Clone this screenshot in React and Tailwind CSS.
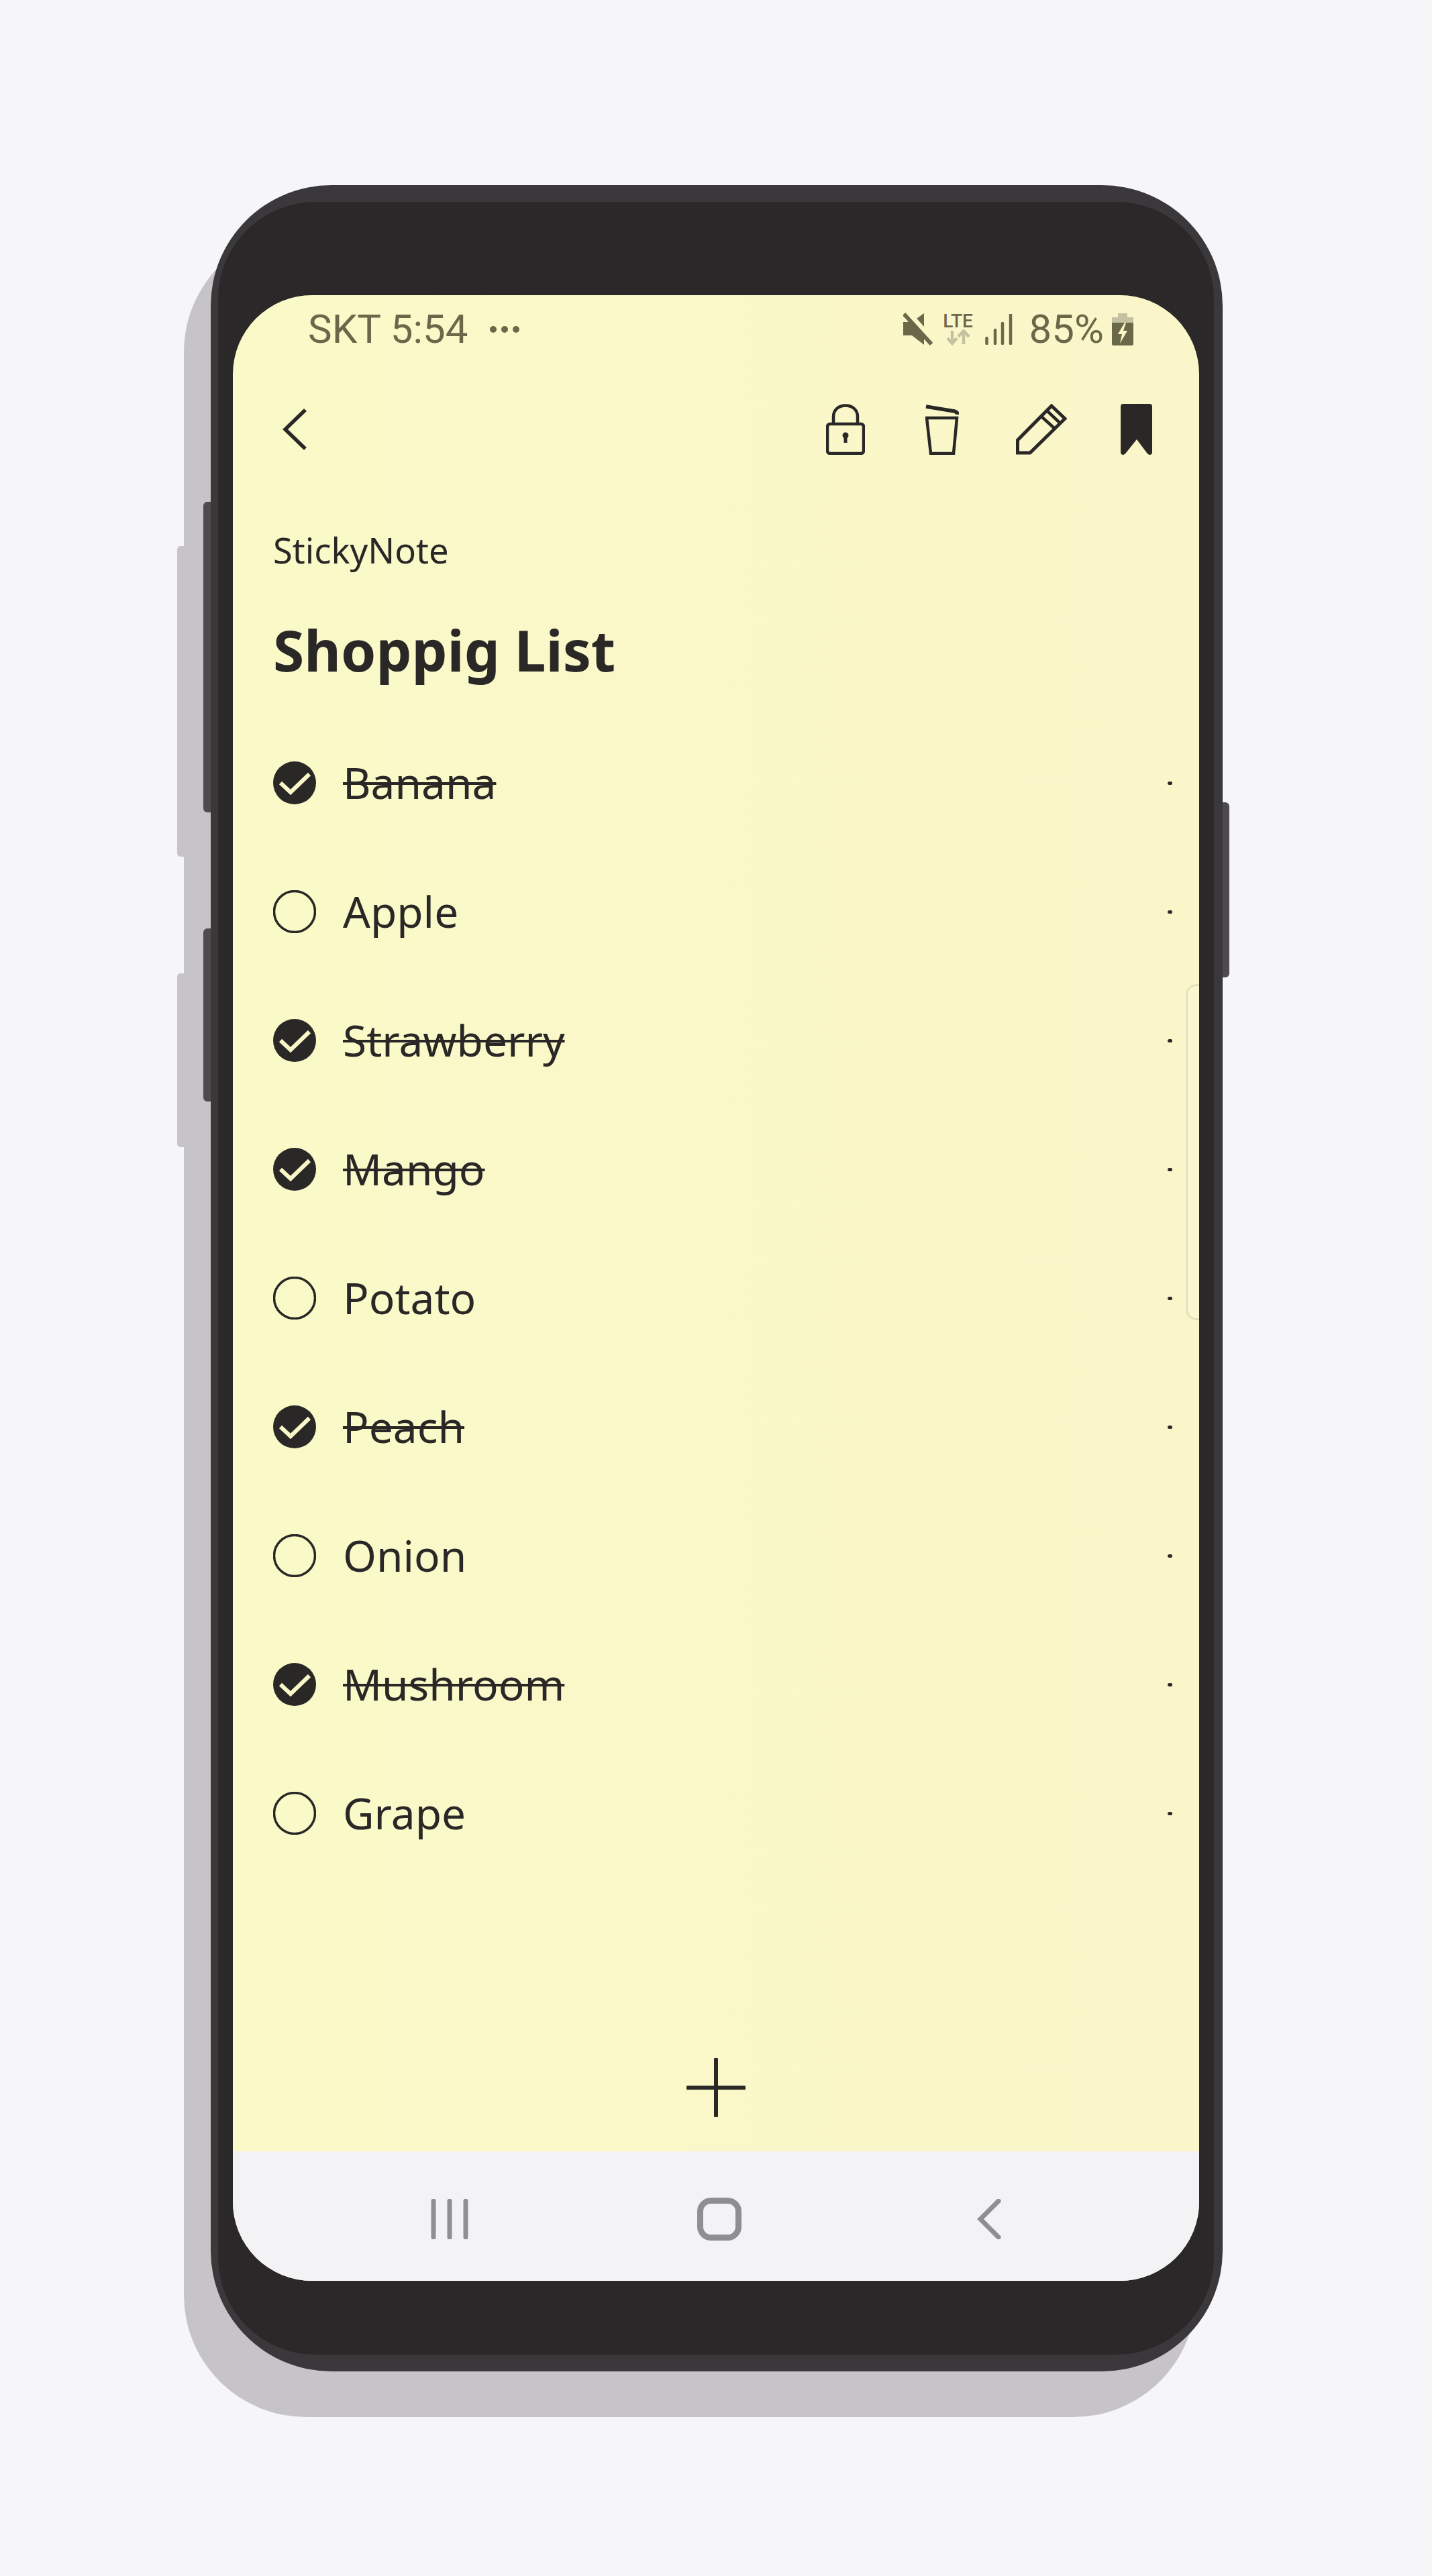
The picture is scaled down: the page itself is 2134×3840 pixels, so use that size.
const items = [
  { name: 'Banana', done: true },
  { name: 'Apple', done: false },
  { name: 'Strawberry', done: true },
  { name: 'Mango', done: true },
  { name: 'Potato', done: false },
  { name: 'Peach', done: true },
  { name: 'Onion', done: false },
  { name: 'Mushroom', done: true },
  { name: 'Grape', done: false },
];

function CheckCircle({ done }) {
  if (!done) {
    return (
      <svg width="64" height="64" viewBox="0 0 64 64" className="shrink-0">
        <circle cx="32" cy="32" r="30.5" fill="none" stroke="#2a2826" strokeWidth="3.5" />
      </svg>
    );
  }
  return (
    <svg width="64" height="64" viewBox="0 0 64 64" className="shrink-0">
      <circle cx="32" cy="32" r="32" fill="#2a2826" />
      <path d="M11 32 L26 46 L54 19" fill="none" stroke="#faf7c8" strokeWidth="6" />
    </svg>
  );
}

function StatusIcons() {
  return (
    <div className="flex items-center text-[#6b6749]">
      {/* mute */}
      <svg width="44" height="50" viewBox="0 0 44 50" className="shrink-0">
        <path d="M0 14 H13 L31 1 V48 L13 34 H0 Z" fill="#6b6749" />
        <path d="M7 0 L47 45" stroke="#faf7c8" strokeWidth="8" />
        <path d="M1 2 L42 47" stroke="#6b6749" strokeWidth="6" />
      </svg>
      {/* lte */}
      <div className="ml-[15px] flex w-[46px] flex-col items-center">
        <span className="font-['Roboto',sans-serif] text-[28px] leading-[24px] font-medium">LTE</span>
        <svg width="36" height="24" viewBox="0 0 36 24" className="shrink-0">
          <path d="M9 2 V20 M2 13 L9 21 L16 13" fill="none" stroke="#c4c2a0" strokeWidth="4.5" />
          <path d="M26 22 V3 M18 11 L26 2 L34 11" fill="none" stroke="#c4c2a0" strokeWidth="4.5" />
        </svg>
      </div>
      {/* signal */}
      <svg width="42" height="46" viewBox="0 0 42 46" className="ml-[17px] shrink-0">
        <path d="M2.5 36 V44 M15 24 V44 M26 14 V44 M38 1 V44" fill="none" stroke="#6b6749" strokeWidth="4.5" strokeLinecap="round" />
      </svg>
      <span className="ml-[24px] font-['Roboto',sans-serif] text-[60px] leading-[60px] font-normal">85%</span>
      {/* battery */}
      <svg width="32" height="48" viewBox="0 0 32 48" className="ml-[12px] shrink-0">
        <path d="M9 0 H23 V6 H32 V14 H0 V6 H9 Z" fill="#c4c2a0" />
        <path d="M0 14 H32 V46 Q32 48 30 48 H2 Q0 48 0 46 Z" fill="#6b6749" />
        <path d="M19 14 L9 31 H15 L12 45 L23 26 H17 L21 14 Z" fill="#faf7c8" />
      </svg>
    </div>
  );
}

function Toolbar() {
  return (
    <div className="flex h-[196px] items-center pr-[70px] pl-[74px]">
      <svg width="36" height="62" viewBox="0 0 36 62" className="shrink-0">
        <path d="M34 2 L4 31 L34 60" fill="none" stroke="#2a2826" strokeWidth="5.5" />
      </svg>
      {/* lock */}
      <svg width="58" height="76" viewBox="0 0 58 76" className="ml-auto shrink-0">
        <rect x="2" y="30" width="54" height="44" rx="4" fill="none" stroke="#2a2826" strokeWidth="4.5" />
        <path d="M11 30 V19 C11 -3 47 -3 47 19 V30" fill="none" stroke="#2a2826" strokeWidth="4.5" />
        <circle cx="29" cy="47" r="4.5" fill="#2a2826" />
        <path d="M29 47 V58" stroke="#2a2826" strokeWidth="5" />
      </svg>
      {/* trash */}
      <svg width="50" height="75" viewBox="0 0 50 75" className="ml-[90px] shrink-0">
        <path d="M1 3 L43 10 C47 11 48 13 48 15" fill="none" stroke="#2a2826" strokeWidth="5.5" />
        <path d="M2 20 H47 L42 73 H8 Z" fill="none" stroke="#2a2826" strokeWidth="4.5" />
      </svg>
      {/* pencil */}
      <svg width="76" height="76" viewBox="0 0 76 76" className="ml-[85px] shrink-0">
        <path d="M2.5 73 V54 L53 3 L73 22 L21 73 Z" fill="none" stroke="#2a2826" strokeWidth="5" />
        <path d="M38 19 L58 37 M47 11 L66 29" fill="none" stroke="#2a2826" strokeWidth="4.5" />
      </svg>
      {/* bookmark */}
      <svg width="47" height="76" viewBox="0 0 47 76" className="ml-[80px] shrink-0">
        <path d="M4 0 H43 Q47 0 47 4 V72 Q47 76 43 76 Q41 76 39 73 L24 53 L8 73 Q6 76 4 76 Q0 76 0 72 V4 Q0 0 4 0 Z" fill="#2a2826" />
      </svg>
    </div>
  );
}

function Row({ name, done }) {
  return (
    <div className="flex h-[192px] items-center pr-[40px] pl-[60px]">
      <CheckCircle done={done} />
      <span
        className={`ml-[40px] font-['Noto_Sans',sans-serif] text-[64px] leading-none text-[#2a2826] ${
          done ? 'line-through decoration-[4px]' : ''
        }`}
      >
        {name}
      </span>
      <span className="ml-auto h-[5px] w-[7px] rounded-full bg-[#2a2826]" />
    </div>
  );
}

function NavBar() {
  return (
    <div className="flex h-[193px] items-center bg-[#f3f2f4] pt-[8px]">
      <svg width="56" height="60" viewBox="0 0 56 60" className="ml-[295px] shrink-0">
        <path d="M4 3 V57 M28 3 V57 M52 3 V57" fill="none" stroke="#8f8e91" strokeWidth="7" strokeLinecap="round" />
      </svg>
      <svg width="66" height="64" viewBox="0 0 66 64" className="ml-[341px] shrink-0">
        <rect x="4.5" y="4.5" width="57" height="55" rx="16" fill="none" stroke="#8f8e91" strokeWidth="9" />
      </svg>
      <svg width="36" height="60" viewBox="0 0 36 60" className="ml-[351px] shrink-0">
        <path d="M32 3 L5 30 L32 57" fill="none" stroke="#8f8e91" strokeWidth="7" strokeLinecap="round" />
      </svg>
    </div>
  );
}

export default function App() {
  return (
    <div className="h-[3840px] w-[2134px] overflow-hidden bg-[#f6f5f8] pt-[276px] pl-[314px]">
      <div className="relative w-[1508px]">
        {/* shadow behind the phone */}
        <div className="absolute top-[67px] -left-[40px] h-[3260px] w-[1508px] rounded-[182px] bg-[#c6c4c7]" />
        <div className="absolute top-[538px] -left-[50px] h-[463px] w-[12px] rounded-l-[5px] bg-[#c6c4c7]" />
        <div className="absolute top-[1175px] -left-[50px] h-[259px] w-[12px] rounded-l-[5px] bg-[#c6c4c7]" />

        {/* side buttons */}
        <div className="absolute top-[472px] -left-[11px] h-[463px] w-[14px] rounded-l-[6px] bg-[#4d4b4e]" />
        <div className="absolute top-[1108px] -left-[11px] h-[258px] w-[14px] rounded-l-[6px] bg-[#4d4b4e]" />
        <div className="absolute top-[920px] -right-[10px] h-[261px] w-[12px] rounded-r-[6px] bg-[#4d4b4e]" />

        {/* phone body */}
        <div className="relative rounded-[180px] bg-[#3a383a] pt-[25px] pr-[13px] pb-[25px] pl-[11px]">
          <div className="rounded-[145px] bg-[#2a2829] pt-[139px] pr-[22px] pb-[110px] pl-[22px]">
            <div className="relative flex h-[2960px] flex-col overflow-hidden rounded-[118px] bg-linear-to-r from-[#fafac8] via-[#faf7c9] to-[#faf6c9]">
              {/* status bar */}
              <div className="flex h-[102px] shrink-0 items-center justify-between pr-[98px] pl-[112px] text-[#6b6749]">
                <div className="flex items-center">
                  <span className="font-['Roboto',sans-serif] text-[60px] leading-[60px] font-normal">SKT 5:54</span>
                  <span className="ml-[33px] flex gap-[7px]">
                    <span className="h-[10px] w-[10px] rounded-full bg-[#6b6749]" />
                    <span className="h-[10px] w-[10px] rounded-full bg-[#6b6749]" />
                    <span className="h-[10px] w-[10px] rounded-full bg-[#6b6749]" />
                  </span>
                </div>
                <StatusIcons />
              </div>

              <Toolbar />

              <div className="mt-[45px] pl-[60px] font-['Noto_Sans',sans-serif] text-[#2a2826]">
                <p className="text-[52.5px] leading-[74px]">StickyNote</p>
                <h1 className="mt-[70px] text-[84px] leading-[84px] font-bold">Shoppig List</h1>
              </div>

              <div className="mt-[60px]">
                {items.map((item) => (
                  <Row key={item.name} name={item.name} done={item.done} />
                ))}
              </div>

              {/* scroll handle */}
              <div className="absolute top-[1027px] right-0 h-[501px] w-[20px] rounded-l-[16px] border-y-[3px] border-l-[3px] border-[#e4e1c0] bg-[#faf6d0]" />

              {/* add button */}
              <div className="mt-auto flex h-[186px] items-start justify-center pt-[47px]">
                <svg width="88" height="88" viewBox="0 0 88 88" className="shrink-0">
                  <path d="M2 44 H86 M44 2 V86" fill="none" stroke="#2a2826" strokeWidth="6" strokeLinecap="round" />
                </svg>
              </div>

              <NavBar />
            </div>
          </div>
        </div>
      </div>
    </div>
  );
}
